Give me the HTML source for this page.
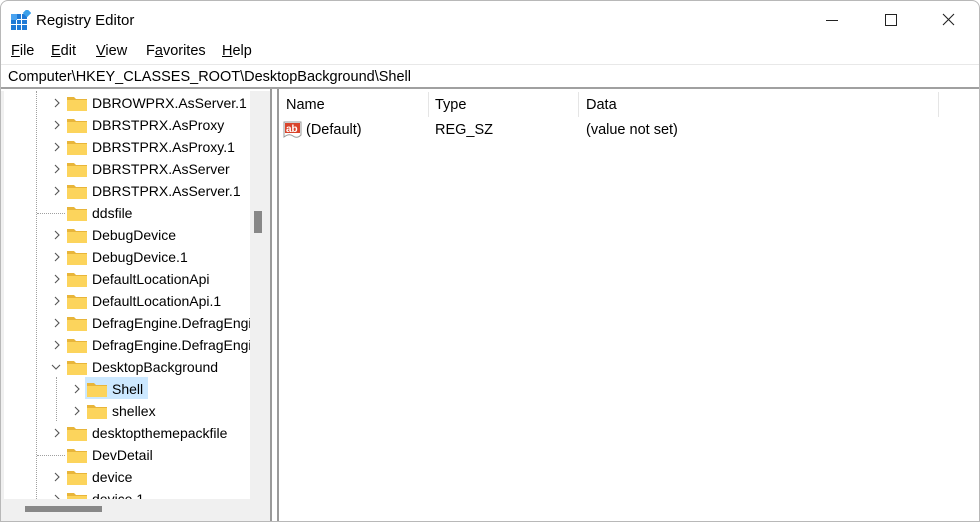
<!DOCTYPE html>
<html><head><meta charset="utf-8"><style>
*{margin:0;padding:0;box-sizing:border-box}
body{width:980px;height:522px;overflow:hidden;background:#fff;font-family:"Liberation Sans",sans-serif;font-size:14.5px;color:#000;position:relative}
.win{position:absolute;left:0;top:0;width:980px;height:522px;border:1px solid #b8b8b8;border-radius:8px 8px 0 0;background:#fff;overflow:hidden}
.abs{position:absolute}
.menu span{position:absolute;top:42px;font-size:14.5px}
.addr{position:absolute;left:0;top:63px;width:980px;height:25px;border-top:1px solid #e8e8e8;border-bottom:2px solid #a0a0a0;background:#fff;padding:4px 0 0 7px;font-size:14.5px}
.tree{position:absolute;left:3px;top:90px;width:246px;height:408px;overflow:hidden;background:#fff}
.row{position:absolute;height:22px;white-space:nowrap;font-size:14px;line-height:22px}
.fold{position:absolute;width:20px;height:15px;top:4px}
.chev{position:absolute;top:6px;width:10px;height:10px}
.vl{position:absolute;border-left:1px dotted #a0a0a0}
</style></head><body><div class="win">
<svg class="abs" style="left:10px;top:9px" width="20" height="20" viewBox="0 0 20 20">
<rect x="0" y="4" width="16" height="16" fill="#1f7ad6"/>
<g stroke="#fff" stroke-width="1"><line x1="5.5" y1="4" x2="5.5" y2="20"/><line x1="10.5" y1="4" x2="10.5" y2="20"/><line x1="0" y1="9.5" x2="16" y2="9.5"/><line x1="0" y1="14.5" x2="16" y2="14.5"/></g>
<rect x="0" y="4" width="6" height="6" fill="#4aa3f0"/>
<rect x="13" y="0" width="6" height="6" fill="#3aa0ea" transform="rotate(45 16 3)"/>
</svg>
<div class="abs" style="left:35px;top:11px;font-size:15px">Registry Editor</div>
<svg class="abs" style="left:820px;top:8px" width="150" height="24">
<line x1="5" y1="11.5" x2="17" y2="11.5" stroke="#222"/>
<rect x="64.5" y="5.5" width="11" height="11" fill="none" stroke="#222"/>
<path d="M122 5 L133 16 M133 5 L122 16" stroke="#222" stroke-width="1.1"/>
</svg>
<div class="menu"><span style="left:10px"><u>F</u>ile</span><span style="left:50px"><u>E</u>dit</span><span style="left:95px"><u>V</u>iew</span><span style="left:145px">F<u>a</u>vorites</span><span style="left:221px"><u>H</u>elp</span></div>
<div class="addr">Computer\HKEY_CLASSES_ROOT\DesktopBackground\Shell</div>
<div class="abs" style="left:0;top:90px;width:270px;height:432px;background:#f0f0f0"></div>
<div class="tree">
<div class="vl" style="left:32px;top:0;height:408px"></div>
<div class="vl" style="left:52px;top:286px;height:44px"></div>
<div id="rows"></div>
</div>
<div class="abs" style="left:253px;top:210px;width:8px;height:22px;background:#888"></div>
<div class="abs" style="left:24px;top:505px;width:77px;height:6px;background:#888"></div>
<div class="abs" style="left:269px;top:88px;width:2px;height:434px;background:#9a9a9a"></div>
<div class="abs" style="left:276px;top:88px;width:2px;height:434px;background:#9a9a9a"></div>
<div class="abs" style="left:278px;top:90px;width:702px;height:432px;background:#fff"></div>
<div class="abs" style="left:285px;top:96px">Name</div>
<div class="abs" style="left:434px;top:96px">Type</div>
<div class="abs" style="left:585px;top:96px">Data</div>
<div class="abs" style="left:427px;top:91px;width:1px;height:25px;background:#e5e5e5"></div>
<div class="abs" style="left:577px;top:91px;width:1px;height:25px;background:#e5e5e5"></div>
<div class="abs" style="left:937px;top:91px;width:1px;height:25px;background:#e5e5e5"></div>
<svg class="abs" style="left:282px;top:119px" width="20" height="20" viewBox="0 0 20 20">
<path d="M1 2 H18 V15 Q14 19 10 16 Q6 13 1 17 Z" fill="#fff" stroke="#999"/>
<rect x="2" y="3" width="15" height="10" fill="#d9442b"/>
<text x="3" y="12" font-size="10" font-weight="bold" fill="#fff" font-family="Liberation Sans">ab</text>
</svg>
<div class="abs" style="left:305px;top:121px">(Default)</div>
<div class="abs" style="left:434px;top:121px">REG_SZ</div>
<div class="abs" style="left:585px;top:121px">(value not set)</div>
</div>
<script>
var items=[["DBROWPRX.AsServer.1",0,1],["DBRSTPRX.AsProxy",0,1],["DBRSTPRX.AsProxy.1",0,1],["DBRSTPRX.AsServer",0,1],["DBRSTPRX.AsServer.1",0,1],["ddsfile",0,0],["DebugDevice",0,1],["DebugDevice.1",0,1],["DefaultLocationApi",0,1],["DefaultLocationApi.1",0,1],["DefragEngine.DefragEngine",0,1],["DefragEngine.DefragEngine.1",0,1],["DesktopBackground",0,2],["Shell",1,1],["shellex",1,1],["desktopthemepackfile",0,1],["DevDetail",0,0],["device",0,1],["device.1",0,1]];
var h="";
items.forEach(function(it,i){var t=1+22*i,x=it[1]?20:0;
if(it[0]=="Shell")h+='<div class="abs" style="left:81px;top:'+(t-1)+'px;width:63px;height:22px;background:#cce8ff"></div>';
h+='<div class="row" style="left:0;top:'+t+'px;width:246px">';
if(it[2]==1)h+='<svg class="chev" style="left:'+(48+x)+'px" viewBox="0 0 10 10"><path d="M3 1 L7 5 L3 9" fill="none" stroke="#555" stroke-width="1.1"/></svg>';
else if(it[2]==2)h+='<svg class="chev" style="left:'+(47+x)+'px" viewBox="0 0 10 10"><path d="M1 3 L5 7 L9 3" fill="none" stroke="#555" stroke-width="1.1"/></svg>';
else h+='<div class="abs" style="left:'+(33+x)+'px;top:11px;width:28px;border-top:1px dotted #a0a0a0"></div>';
h+='<svg class="fold" style="left:'+(63+x)+'px" viewBox="0 0 20 15"><path d="M0 1 H7 L9 3 H20 V15 H0Z" fill="#e8b53a"/><rect x="0" y="4" width="20" height="11" fill="#fcd45c"/></svg>';
h+='<span class="abs" style="left:'+(88+x)+'px;top:0">'+it[0]+'</span></div>';});
document.getElementById("rows").innerHTML=h;
</script>
</body></html>
